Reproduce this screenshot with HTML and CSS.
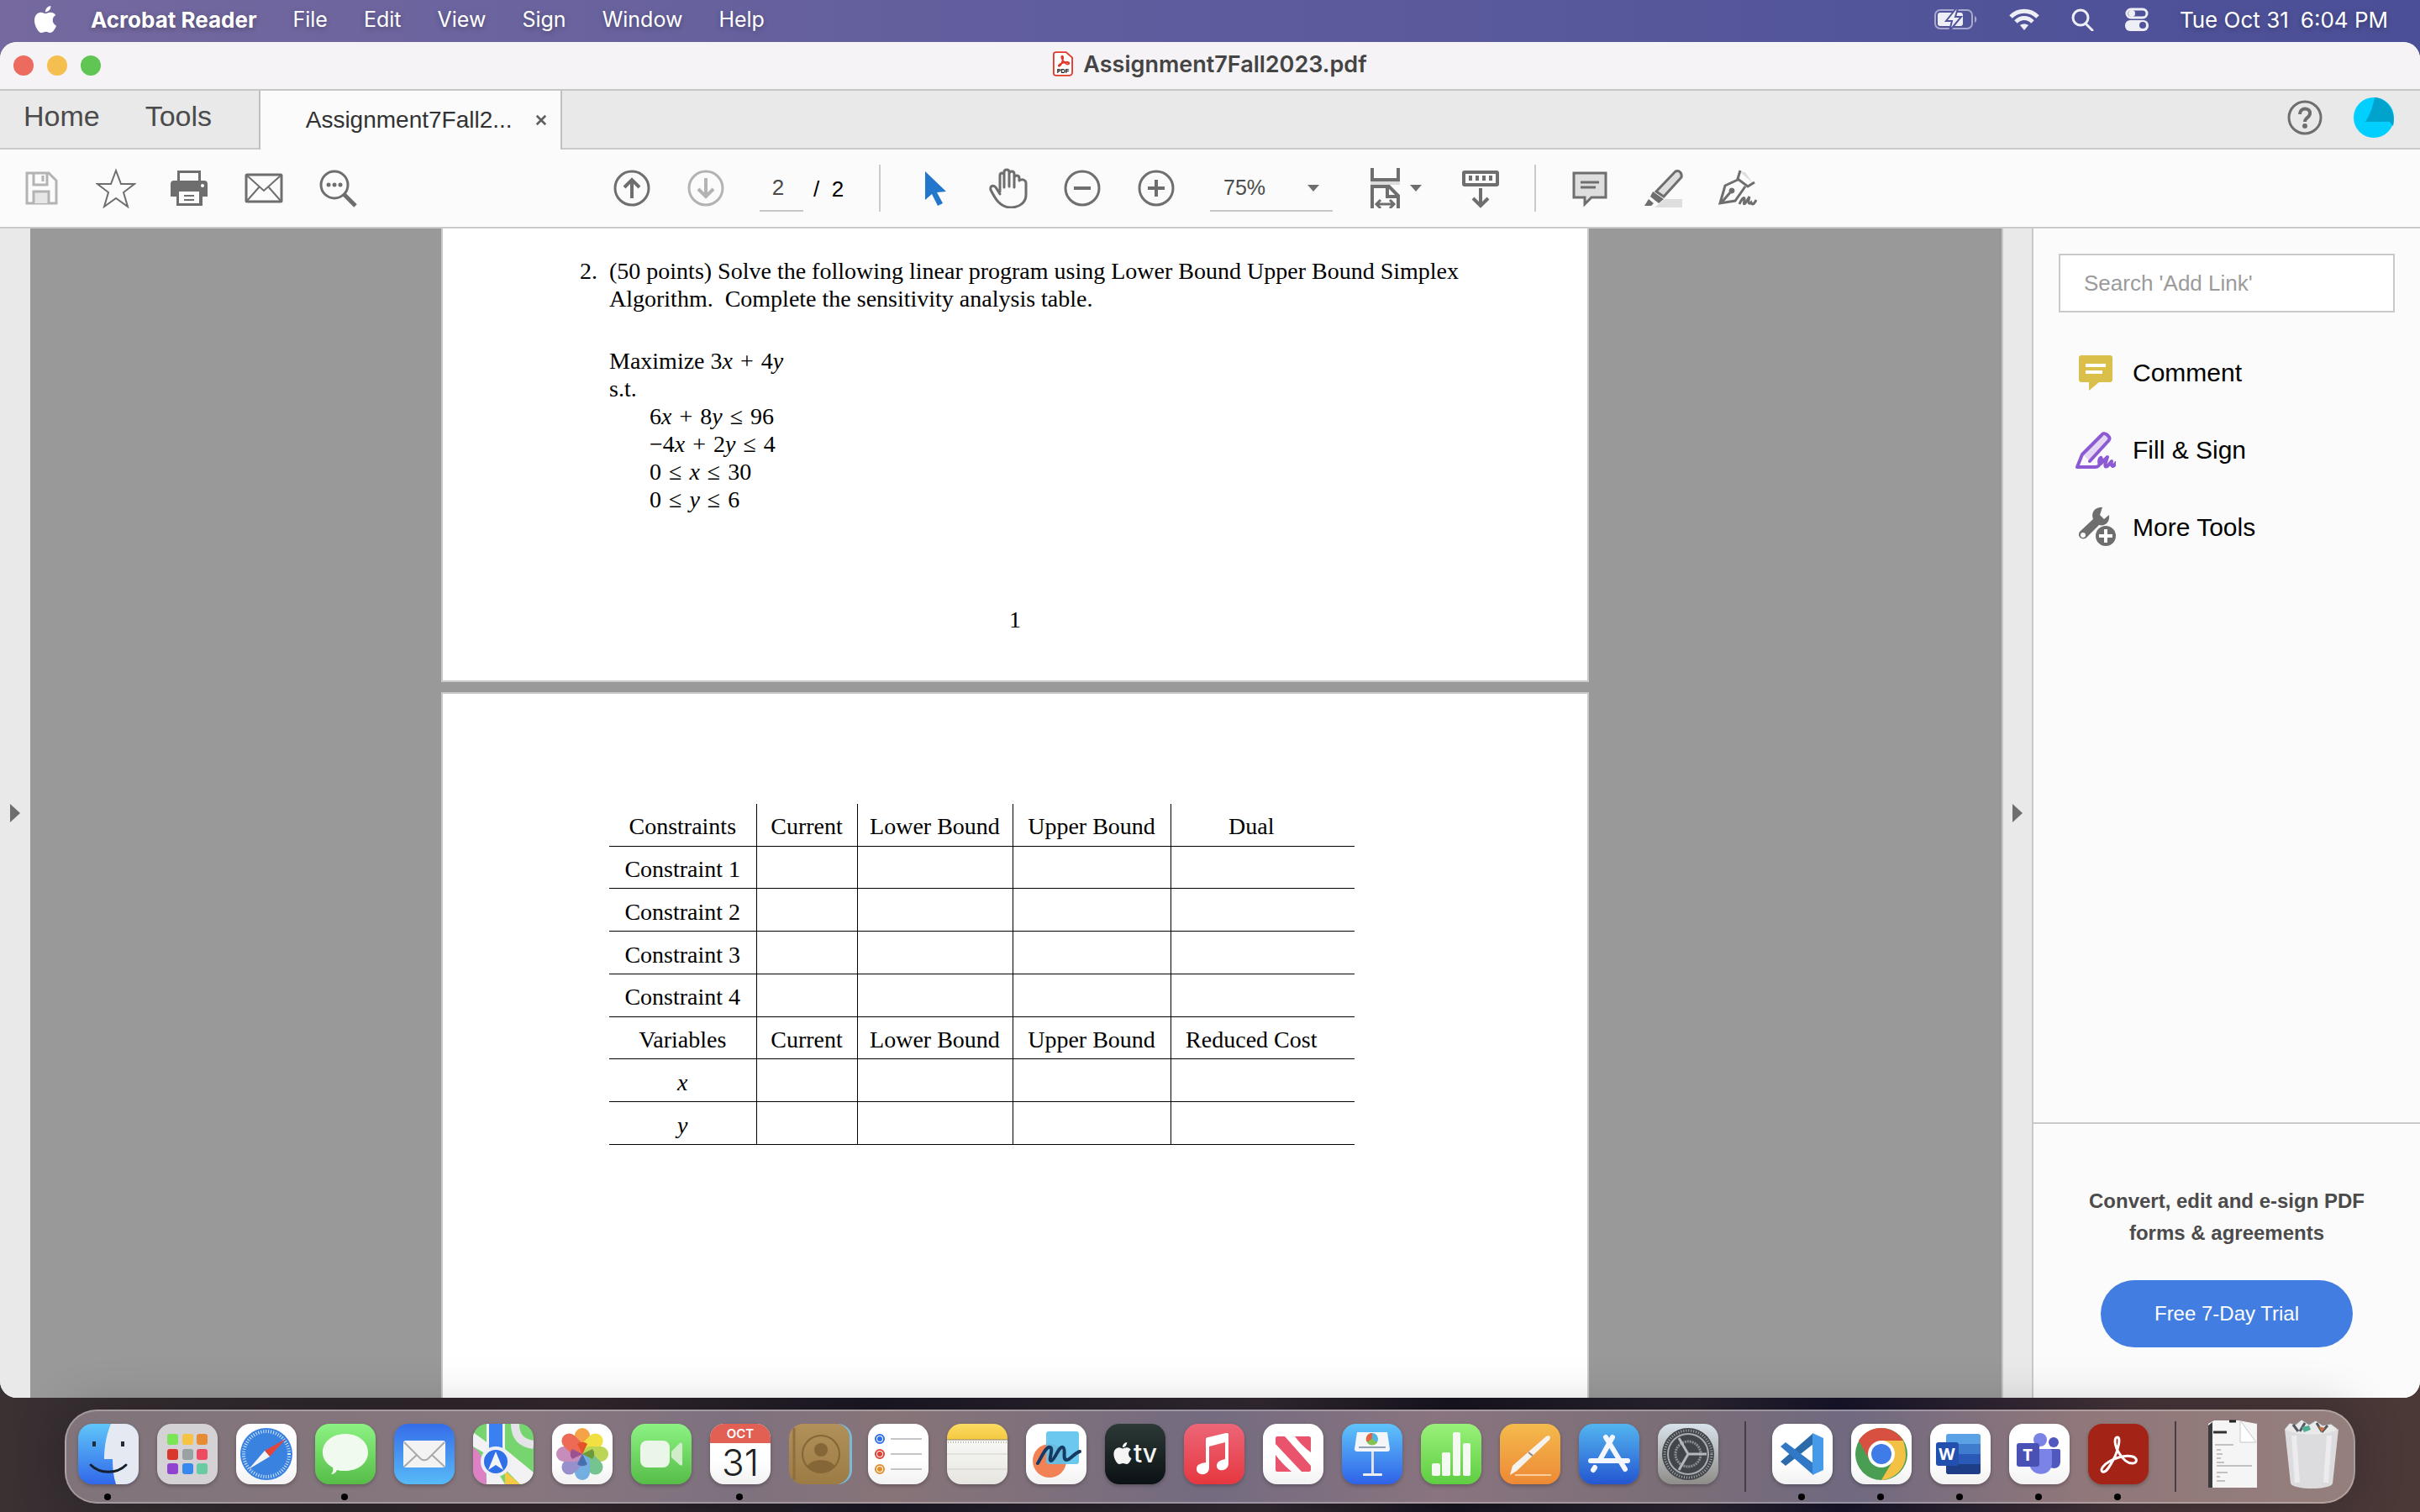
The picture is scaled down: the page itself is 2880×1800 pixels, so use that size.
FILE: index.html
```html
<!DOCTYPE html>
<html lang="en">
<head>
  <meta charset="UTF-8" />
  <title>Assignment7Fall2023.pdf</title>
  <link rel="stylesheet" href="styles.css">
</head>
<body>
  <header class="menubar">
    <nav class="menus">
      <svg class="apple" viewBox="0 0 24 24" fill="#fff"><path d="M12.152 6.896c-.948 0-2.415-1.078-3.96-1.04-2.04.027-3.91 1.183-4.961 3.014-2.117 3.675-.546 9.103 1.519 12.09 1.013 1.454 2.208 3.09 3.792 3.039 1.52-.065 2.09-.987 3.935-.987 1.831 0 2.35.987 3.96.948 1.637-.026 2.676-1.48 3.676-2.948 1.156-1.688 1.636-3.325 1.662-3.415-.039-.013-3.182-1.221-3.22-4.857-.026-3.04 2.48-4.494 2.597-4.559-1.429-2.09-3.623-2.324-4.39-2.376-2-.156-3.675 1.09-4.61 1.09zM15.53 3.83c.843-1.012 1.4-2.427 1.245-3.83-1.207.052-2.662.805-3.532 1.818-.78.896-1.454 2.338-1.273 3.714 1.338.104 2.715-.688 3.559-1.701"/></svg>
      <a href="#" class="app-name">Acrobat Reader</a>
      <a href="#">File</a>
      <a href="#">Edit</a>
      <a href="#">View</a>
      <a href="#">Sign</a>
      <a href="#">Window</a>
      <a href="#">Help</a>
    </nav>
    <div class="status">
      <svg width="52" height="28" viewBox="0 0 52 28"><rect x="1" y="3" width="44" height="22" rx="6" fill="none" stroke="#a9a9d0" stroke-width="2"/><path d="M48 10c3 1 3 7 0 8z" fill="#a9a9d0"/><rect x="4" y="6" width="30" height="16" rx="3" fill="#eeeef6"/><path d="M26 1L14 16h7l-3 12L32 11h-7l3-10z" fill="#eeeef6" stroke="#51549b" stroke-width="2"/></svg>
      <svg width="36" height="28" viewBox="0 0 36 28" fill="none" stroke="#eeeef6" stroke-width="5"><path d="M2 11C11 2 25 2 34 11"/><path d="M8 17c6-6 14-6 20 0"/><path d="M18 27l-5-6c3-2 7-2 10 0z" fill="#eeeef6" stroke="none"/></svg>
      <svg width="28" height="28" viewBox="0 0 28 28" fill="none" stroke="#eeeef6" stroke-width="3"><circle cx="12" cy="12" r="9"/><path d="M18 19l8 8" stroke-linecap="round"/></svg>
      <svg width="28" height="28" viewBox="0 0 28 28"><rect x="2" y="2" width="24" height="10" rx="5" fill="none" stroke="#eeeef6" stroke-width="3"/><circle cx="8" cy="7" r="4" fill="#eeeef6"/><rect x="0" y="15" width="28" height="13" rx="6" fill="#eeeef6"/><circle cx="21" cy="21" r="4" fill="#51549b"/></svg>
      <time class="clock"><span>Tue Oct 31</span><span>6:04 PM</span></time>
    </div>
  </header>

  <div class="window">
    <div class="titlebar">
      <div class="lights">
        <button class="light close" aria-label="Close"></button>
        <button class="light minimize" aria-label="Minimize"></button>
        <button class="light zoom" aria-label="Zoom"></button>
      </div>
      <svg width="24" height="30" viewBox="0 0 26 32"><path d="M4 1h13l8 7v19a4 4 0 0 1-4 4H4a3 3 0 0 1-3-3V4a3 3 0 0 1 3-3z" fill="#fff" stroke="#e2382c" stroke-width="2"/><path d="M12 6c-2 0 0 6 4 9 2 2 5 2 5 0s-6-1-9 0-6 4-4 4c3 0 7-13 4-13z" fill="none" stroke="#e2382c" stroke-width="2"/><text x="13" y="28" class="pdf-label">PDF</text></svg>
      <h1>Assignment7Fall2023.pdf</h1>
    </div>

    <div class="tabbar">
      <a href="#" class="home">Home</a>
      <a href="#" class="tools">Tools</a>
      <div class="tab">
        <span>Assignment7Fall2...</span>
        <button aria-label="Close tab"><svg width="14" height="14" viewBox="0 0 16 16" stroke="#5f5f5f" stroke-width="3"><path d="M2 2l12 12M14 2L2 14"/></svg></button>
      </div>
      <div class="account">
        <button aria-label="Help"><svg width="44" height="44" viewBox="0 0 44 44"><circle cx="22" cy="22" r="19" fill="none" stroke="#6e6e6e" stroke-width="3"/><path d="M16 18c0-9 13-8 12-1 0 5-6 5-6 10" fill="none" stroke="#6e6e6e" stroke-width="4"/><circle cx="22" cy="32" r="3" fill="#6e6e6e"/></svg></button>
        <button aria-label="Account"><svg width="48" height="48" viewBox="0 0 48 48"><circle cx="24" cy="24" r="24" fill="#00cfff"/><path d="M25 0c15 1 26 17 22 34l-4-5H14C20 20 23 10 25 0z" fill="#00a3cb"/></svg></button>
      </div>
    </div>

    <div class="toolbar">
      <div class="file-tools">
        <button aria-label="Save"><svg viewBox="0 0 48 48" fill="none" stroke="#b3b3b3" stroke-width="3"><path d="M6 6h26l9 9v27H6z"/><path d="M14 6v14h16V6" /><path d="M25 9v7" /><path d="M14 42V28h18v14" fill="#e6e6e6"/></svg></button>
        <button aria-label="Star"><svg viewBox="0 0 48 48" fill="none" stroke="#6e6e6e" stroke-width="2"><path d="M24 3l6 16h16L33 29l5 17-14-10-14 10 5-17L2 19h16z"/></svg></button>
        <button aria-label="Print"><svg viewBox="0 0 48 48" fill="#6e6e6e"><path d="M9 3h28v12h4a4 4 0 0 1 4 4v15h-6v11H8V34H1V19a4 4 0 0 1 4-4h4zm3 3v9h22V6zm-1 22v14h24V28z" fill-rule="evenodd"/><path d="M17 32h12v2H17zM17 37h12v2H17z"/><circle cx="39" cy="21" r="2" fill="#fff"/></svg></button>
        <button aria-label="Email"><svg viewBox="0 0 48 48" fill="none" stroke="#6e6e6e" stroke-width="3"><rect x="3" y="8" width="42" height="32" rx="1"/><path d="M4 9l20 18L44 9M4 39l15-17M44 39L29 22" stroke-width="2"/></svg></button>
        <button aria-label="Find"><svg viewBox="0 0 48 48" fill="none" stroke="#6e6e6e" stroke-width="3"><circle cx="20" cy="20" r="16"/><path d="M31 31l14 14" stroke-width="5"/><g fill="#6e6e6e" stroke="none"><circle cx="13" cy="20" r="2.500"/><circle cx="20" cy="20" r="2.500"/><circle cx="27" cy="20" r="2.500"/></g></svg></button>
      </div>

      <div class="page-tools">
        <button aria-label="Previous page"><svg viewBox="0 0 48 48" fill="none" stroke="#6e6e6e" stroke-width="3"><circle cx="24" cy="24" r="20"/><path d="M24 36V14M15 23l9-9 9 9" stroke-width="4"/></svg></button>
        <button aria-label="Next page"><svg viewBox="0 0 48 48" fill="none" stroke="#b3b3b3" stroke-width="3"><circle cx="24" cy="24" r="20"/><path d="M24 12v22M15 25l9 9 9-9" stroke-width="4"/></svg></button>
        <input class="page-input" type="text" value="2" aria-label="Page">
        <span class="page-count">/&nbsp; 2</span>
        <span class="divider"></span>
        <button aria-label="Select"><svg viewBox="0 0 48 48" fill="#2276cc"><path d="M13 4v34l8-7 7 14 6-3-7-13 11-1z"/></svg></button>
        <button aria-label="Hand"><svg viewBox="0 0 48 48" fill="none" stroke="#6e6e6e" stroke-width="3" stroke-linejoin="round" stroke-linecap="round"><path d="M14 28V9c0-4 5-4 5 0v14V5c0-4 6-4 6 0v17V7c0-4 6-4 6 0v16V12c0-4 6-4 6 0v3c4-3 8 0 8 3v14c0 9-8 15-18 15C14 47 8 36 3 26c-1-5 3-6 6-3l5 8" /></svg></button>
        <button aria-label="Zoom out"><svg viewBox="0 0 48 48" fill="none" stroke="#6e6e6e" stroke-width="3"><circle cx="24" cy="24" r="20"/><path d="M14 24h20" stroke-width="4"/></svg></button>
        <button aria-label="Zoom in"><svg viewBox="0 0 48 48" fill="none" stroke="#6e6e6e" stroke-width="3"><circle cx="24" cy="24" r="20"/><path d="M14 24h20M24 14v20" stroke-width="4"/></svg></button>
        <div class="zoom-level">
          <select aria-label="Zoom level"><option>75%</option></select>
          <svg width="14" height="8" viewBox="0 0 14 8" fill="#6e6e6e"><path d="M0 0h14L7 8z"/></svg>
        </div>
        <button class="fit" aria-label="Fit width"><svg viewBox="0 0 48 48" fill="none" stroke="#6e6e6e" stroke-width="4"><path d="M11 0v14h31V0"/><path d="M9 18h35" stroke="#dcdcdc"/><path d="M11 48V22h20l11 11v15M29 22v12h12"/><path d="M16 43h21M21 38l-5 5 5 5M32 38l5 5-5 5" stroke-width="3"/></svg><svg class="caret" viewBox="0 0 14 8" fill="#6e6e6e"><path d="M0 0h14L7 8z"/></svg></button>
        <button class="scroll-mode" aria-label="Scrolling"><svg viewBox="0 0 48 48" fill="none" stroke="#6e6e6e" stroke-width="4"><rect x="4" y="5" width="40" height="15" rx="1"/><path d="M10 12h28" stroke-width="6" stroke-dasharray="4 4"/><path d="M24 24v20M15 36l9 9 9-9"/></svg></button>
        <span class="divider"></span>
        <button aria-label="Comment"><svg viewBox="0 0 48 48" fill="#dedede" stroke="#6e6e6e" stroke-width="3"><path d="M5 6h38v29H26l-8 8v-8H5z"/><path d="M13 17h22M13 23h18"/></svg></button>
        <button aria-label="Highlight"><svg viewBox="0 0 48 48"><path d="M46 37v10H13l12-10z" fill="#dedede"/><path d="M38 4c5-2 8 3 7 7L24 34l-9-6z" fill="#dedede" stroke="#6e6e6e" stroke-width="3"/><path d="M11 28l13 9-6 5-10-8zM6 37l6 5-3 3H1z" fill="#6e6e6e"/></svg></button>
        <button aria-label="Sign"><svg viewBox="0 0 48 48" fill="none" stroke="#6e6e6e" stroke-width="3"><path d="M26 4l16 14-9-13z" fill="#dedede" stroke="none"/><path d="M27 3l-3 10 12 9 8-5M24 14L9 21 3 42l18-3 12-17M4 42l12-14"/><circle cx="17" cy="27" r="3" fill="#6e6e6e" stroke-width="1"/><path d="M26 43c2-5 6-10 6-6s-2 7 1 5l5-8c-2 7-1 10 2 7 1 3 3 3 6-3"/></svg></button>
      </div>
    </div>

    <div class="workspace">
      <button class="rail" aria-label="Open navigation pane"><svg width="12" height="22" viewBox="0 0 12 22" fill="#6e6e6e"><path d="M0 0l12 11L0 22z"/></svg></button>

      <main class="viewer">
        <section class="page">
          <div class="question">
            <span class="number">2.</span>
            <div>
              <p>(50 points) Solve the following linear program using Lower Bound Upper Bound Simplex<br>Algorithm.&nbsp; Complete the sensitivity analysis table.</p>
              <p class="program">Maximize 3<i>x</i> <span class="op">+</span> 4<i>y</i><br>s.t.</p>
              <p class="limits">6<i>x</i> <span class="op">+</span> 8<i>y</i> <span class="op">≤</span> 96<br>−4<i>x</i> <span class="op">+</span> 2<i>y</i> <span class="op">≤</span> 4<br>0 <span class="op">≤</span> <i>x</i> <span class="op">≤</span> 30<br>0 <span class="op">≤</span> <i>y</i> <span class="op">≤</span> 6</p>
            </div>
          </div>
          <p class="folio">1</p>
        </section>

        <section class="page second">
          <table class="sensitivity">
            <tr><th>Constraints</th><th>Current</th><th>Lower Bound</th><th>Upper Bound</th><th>Dual</th></tr>
            <tr><td>Constraint 1</td><td></td><td></td><td></td><td></td></tr>
            <tr><td>Constraint 2</td><td></td><td></td><td></td><td></td></tr>
            <tr><td>Constraint 3</td><td></td><td></td><td></td><td></td></tr>
            <tr><td>Constraint 4</td><td></td><td></td><td></td><td></td></tr>
            <tr><th>Variables</th><th>Current</th><th>Lower Bound</th><th>Upper Bound</th><th>Reduced Cost</th></tr>
            <tr><td><i>x</i></td><td></td><td></td><td></td><td></td></tr>
            <tr><td><i>y</i></td><td></td><td></td><td></td><td></td></tr>
          </table>
        </section>
      </main>

      <button class="rail right" aria-label="Close tools pane"><svg width="12" height="22" viewBox="0 0 12 22" fill="#6e6e6e"><path d="M0 0l12 11L0 22z"/></svg></button>

      <aside class="panel">
        <input class="search" type="text" placeholder="Search 'Add Link'" aria-label="Search tools">
        <nav class="tool-list">
          <a href="#"><svg viewBox="0 0 48 48"><path d="M7 3h34a3 3 0 0 1 3 3v26a3 3 0 0 1-3 3H28L16 45V35H7a3 3 0 0 1-3-3V6a3 3 0 0 1 3-3z" fill="#dabf4a"/><path d="M12 15h24M12 23h20" stroke="#fff" stroke-width="4"/></svg>Comment</a>
          <a href="#"><svg viewBox="0 0 48 48" fill="none" stroke="#8c5ad3" stroke-width="4" stroke-linejoin="round" stroke-linecap="round"><path d="M10 30L31 6c2-3 5-2 7 0s4 4 1 7L17 37z" fill="#e4d8f3" stroke="none"/><path d="M17 37l22-24c3-3 1-5-1-7s-5-3-7 0L8 29 2 44h22c6 0 8-12 6-11s-3 8 0 7l8-8c-3 9-4 13 0 11l5-6c-1 7 2 8 5 2"/></svg>Fill &amp; Sign</a>
          <a href="#"><svg viewBox="0 0 48 48" fill="#6e6e6e"><path d="M32 0c-9-1-14 7-11 14L5 29c-4 6 4 12 9 6l14-14c8 2 13-4 12-12l-6 5-5-5zM9 30a3 3 0 1 1 0 6 3 3 0 0 1 0-6z" fill-rule="evenodd"/><circle cx="36" cy="34" r="12"/><path d="M28 34h16M36 26v16" stroke="#fff" stroke-width="4"/></svg>More Tools</a>
        </nav>
        <div class="promo">
          <p>Convert, edit and e-sign PDF<br>forms &amp; agreements</p>
          <button>Free 7-Day Trial</button>
        </div>
      </aside>
    </div>
  </div>

  <footer class="dock-area">
    <div class="dock">
      <button class="app finder running" aria-label="Finder"><svg viewBox="0 0 72 72"><path d="M39 0h33v72H45c-3-9-4-19-4-30H31C31 26 34 12 39 0z" fill="#e4e9f2"/><path d="M19 21v6M53 21v6" stroke="#222b38" stroke-width="4"/><path d="M15 49c11 11 31 11 42 0" fill="none" stroke="#15202e" stroke-width="3" stroke-linecap="round"/></svg></button>
      <button class="app launchpad" aria-label="Launchpad"><svg viewBox="0 0 72 72"><rect x="12" y="12" width="13" height="13" rx="3" fill="#7ae555"/><rect x="30" y="12" width="13" height="13" rx="3" fill="#f6c343"/><rect x="47" y="12" width="13" height="13" rx="3" fill="#e78c34"/><rect x="12" y="30" width="13" height="13" rx="3" fill="#d9362d"/><rect x="30" y="30" width="13" height="13" rx="3" fill="#9aa1a2"/><rect x="47" y="30" width="13" height="13" rx="3" fill="#ed4b62"/><rect x="12" y="47" width="13" height="13" rx="3" fill="#9043cf"/><rect x="30" y="47" width="13" height="13" rx="3" fill="#3789ee"/><rect x="47" y="47" width="13" height="13" rx="3" fill="#68cba4"/></svg></button>
      <button class="app white" aria-label="Safari"><svg viewBox="0 0 72 72"><circle cx="36" cy="36" r="31" fill="#3a82e0"/><circle cx="36" cy="36" r="27" fill="none" stroke="#d6e8fb" stroke-width="4" stroke-dasharray="1 2"/><path d="M59 18L34 32l6 7z" fill="#e2453a"/><path d="M15 54l19-22 6 7z" fill="#f3f4f6"/></svg></button>
      <button class="app green running" aria-label="Messages"><svg viewBox="0 0 72 72"><path d="M36 12c15 0 27 9 27 22S51 56 36 56c-4 0-7 0-10-1-1 3-4 5-7 5 2-2 3-5 2-8C14 48 9 42 9 34c0-13 12-22 27-22z" fill="#f0faee"/></svg></button>
      <button class="app mail" aria-label="Mail"><svg viewBox="0 0 72 72"><rect x="11" y="20" width="50" height="32" rx="3" fill="#f3f3f3"/><path d="M12 22l20 20c3 2 5 2 8 0l20-20M12 51l15-14M60 51L45 37" fill="none" stroke="#a9a9a9" stroke-width="2"/></svg></button>
      <button class="app maps" aria-label="Maps"><svg viewBox="0 0 72 72"><path d="M0 28c8 5 16 16 16 44H0z" fill="#dd80c4"/><path d="M16 36l22 36H16zM0 10l19 14v14L0 27zM38 30l34 28v14H56L36 52z" fill="#f2f2f4"/><path d="M38 56l18 16H38z" fill="#f5c944"/><rect x="16" y="0" width="22" height="36" fill="#f2f2f4"/><rect x="19" y="0" width="16" height="36" fill="#3a80f0"/><path d="M50 0c0 16 8 23 22 25" fill="none" stroke="#e4e4e8" stroke-width="10"/><circle cx="27" cy="45" r="16" fill="#2f6fe8" stroke="#eeeef6" stroke-width="4"/><path d="M27 33l9 22-9-6-9 6z" fill="#f4f4f8"/></svg></button>
      <button class="app white" aria-label="Photos"><svg viewBox="0 0 72 72"><g opacity=".9"><rect x="27" y="5" width="18" height="31" rx="9" fill="#f69a34"/><rect x="27" y="5" width="18" height="31" rx="9" fill="#f1dc2e" transform="rotate(45 36 36)"/><rect x="27" y="5" width="18" height="31" rx="9" fill="#b6d143" transform="rotate(90 36 36)"/><rect x="27" y="5" width="18" height="31" rx="9" fill="#67bd85" transform="rotate(135 36 36)"/><rect x="27" y="5" width="18" height="31" rx="9" fill="#65a7df" transform="rotate(180 36 36)"/><rect x="27" y="5" width="18" height="31" rx="9" fill="#8d83c8" transform="rotate(225 36 36)"/><rect x="27" y="5" width="18" height="31" rx="9" fill="#c181b3" transform="rotate(270 36 36)"/><rect x="27" y="5" width="18" height="31" rx="9" fill="#ec5a45" transform="rotate(315 36 36)"/></g><path d="M36 36l-6-12a9 9 0 0 1 12 0z" fill="#e2552b"/><path d="M36 36l-6 12a9 9 0 0 0 12 0z" fill="#4a6fae"/><path d="M36 36l-12-6a9 9 0 0 0 0 12z" fill="#9c5190"/><path d="M36 36l12-6a9 9 0 0 1 0 12z" fill="#6f9a3a"/></svg></button>
      <button class="app green" aria-label="FaceTime"><svg viewBox="0 0 72 72" fill="#eaf7e8"><rect x="11" y="20" width="35" height="32" rx="8"/><path d="M48 33l10-10c2-1 3 0 3 2v22c0 3-1 3-3 2L48 40z" fill="#d0edca"/></svg></button>
      <button class="app white calendar running" aria-label="Calendar"><span class="month">OCT</span><span class="day">31</span></button>
      <button class="app contacts" aria-label="Contacts"><svg viewBox="0 0 72 72"><path d="M6 5v62" stroke="#8e6f3d" stroke-width="3"/><circle cx="38" cy="36" r="22" fill="none" stroke="#846637" stroke-width="2"/><circle cx="38" cy="31" r="8" fill="#846637"/><path d="M22 50c5-9 27-9 32 0-8 11-24 11-32 0z" fill="#846637"/></svg></button>
      <button class="app white" aria-label="Reminders"><svg viewBox="0 0 72 72"><path d="M27 18h37M27 36h37M27 54h37" stroke="#c4c5c8" stroke-width="2"/><g fill="#fff" stroke-width="2"><circle cx="14" cy="18" r="5" stroke="#2f70ea"/><circle cx="14" cy="36" r="5" stroke="#dd4236"/><circle cx="14" cy="54" r="5" stroke="#e28e2d"/></g><circle cx="14" cy="18" r="3" fill="#2f70ea"/><circle cx="14" cy="36" r="3" fill="#dd4236"/><circle cx="14" cy="54" r="3" fill="#e28e2d"/></svg></button>
      <button class="app notes" aria-label="Notes"><svg viewBox="0 0 72 72"><path d="M0 19h72" stroke="#8c8672" stroke-width="1"/><path d="M1 22h70" stroke="#b9b9b6" stroke-width="2" stroke-dasharray="1 2"/><path d="M0 36h72M0 54h72" stroke="#d0d0cd" stroke-width="1"/></svg></button>
      <button class="app white" aria-label="Freeform"><svg viewBox="0 0 72 72"><circle cx="28" cy="44" r="20" fill="#f28155"/><rect x="24" y="9" width="39" height="39" rx="3" fill="#5bc3ee" opacity=".9"/><path d="M14 47c5-8 10-21 15-19 4 2-3 16 1 16s9-18 14-16c4 2-1 14 4 15 4 1 9-8 16-10" fill="none" stroke="#173a63" stroke-width="4" stroke-linecap="round"/></svg></button>
      <button class="app tv" aria-label="TV"><svg viewBox="0 0 24 24" fill="#f5f5f5"><path d="M12.152 6.896c-.948 0-2.415-1.078-3.96-1.04-2.04.027-3.91 1.183-4.961 3.014-2.117 3.675-.546 9.103 1.519 12.09 1.013 1.454 2.208 3.09 3.792 3.039 1.52-.065 2.09-.987 3.935-.987 1.831 0 2.35.987 3.96.948 1.637-.026 2.676-1.48 3.676-2.948 1.156-1.688 1.636-3.325 1.662-3.415-.039-.013-3.182-1.221-3.22-4.857-.026-3.04 2.48-4.494 2.597-4.559-1.429-2.09-3.623-2.324-4.39-2.376-2-.156-3.675 1.09-4.61 1.09zM15.53 3.83c.843-1.012 1.4-2.427 1.245-3.83-1.207.052-2.662.805-3.532 1.818-.78.896-1.454 2.338-1.273 3.714 1.338.104 2.715-.688 3.559-1.701"/></svg><span>tv</span></button>
      <button class="app music" aria-label="Music"><svg viewBox="0 0 72 72" fill="#fff"><path d="M26 19c0-2 1-3 3-3l21-5c2 0 3 0 3 2v34c0 10-14 11-14 3 0-5 5-7 10-8V22l-19 5v25c0 11-15 10-15 2 0-6 5-7 11-8z"/></svg></button>
      <button class="app white" aria-label="News"><svg viewBox="0 0 72 72" fill="#e9536b"><path d="M15 17c0-1 1-2 2-2h9l31 35v5c0 1-1 2-2 2h-9L15 24zM38 15h17c1 0 2 1 2 2v17C50 29 43 22 38 15zM15 37c5 7 12 14 19 20H17c-1 0-2-1-2-2z"/></svg></button>
      <button class="app keynote" aria-label="Keynote"><svg viewBox="0 0 72 72"><path d="M35 30h3v31h-3z" fill="#dfe3e8"/><rect x="25" y="59" width="23" height="3" rx="1" fill="#eee"/><path d="M18 10h36l3 20c0 2-1 3-3 3H18c-2 0-3-1-3-3z" fill="#f3f5f8"/><path d="M20 28h32" stroke="#8fa2b7" stroke-width="2"/><circle cx="36" cy="18" r="7" fill="#4db5e4"/><path d="M36 18v-7a7 7 0 0 0-6 11z" fill="#e4643d"/><path d="M36 18l-6 4a7 7 0 0 0 12 0z" fill="#84c250"/></svg></button>
      <button class="app numbers" aria-label="Numbers"><svg viewBox="0 0 72 72" fill="#f4faf2"><rect x="13" y="47" width="10" height="15" rx="2"/><rect x="25" y="34" width="10" height="28" rx="2"/><rect x="38" y="10" width="9" height="52" rx="2"/><rect x="50" y="23" width="9" height="39" rx="2"/></svg></button>
      <button class="app pages" aria-label="Pages"><svg viewBox="0 0 72 72"><path d="M18 61h43" stroke="#fbcf99" stroke-width="2"/><path d="M12 61l3-11 40-35c4-2 6 0 4 4L20 56z" fill="#f6f3ef"/><path d="M34 34l5 4" stroke="#8d8580" stroke-width="2"/></svg></button>
      <button class="app appstore" aria-label="App Store"><svg viewBox="0 0 72 72" stroke="#f4f8fe" stroke-width="6" stroke-linecap="round"><path d="M40 16L25 43M32 16l23 38M14 44h44M19 52l-2 3"/></svg></button>
      <button class="app settings" aria-label="System Settings"><svg viewBox="0 0 72 72" fill="none"><circle cx="36" cy="36" r="31" fill="#42454a"/><circle cx="36" cy="36" r="28" stroke="#a9adb1" stroke-width="3" stroke-dasharray="1 2"/><circle cx="36" cy="36" r="24" stroke="#a9adb1" stroke-width="2"/><circle cx="36" cy="36" r="15" stroke="#8b8f94" stroke-width="3" stroke-dasharray="2 1"/><path d="M36 36h22M36 36L25 17M36 36L25 55" stroke="#b5b9bd" stroke-width="3"/></svg></button>
      <span class="separator"></span>
      <button class="app white running" aria-label="Visual Studio Code"><svg viewBox="0 0 72 72"><path d="M10 45l6 5 33-26V11z" fill="#2b6bab"/><path d="M10 27l6-5 33 25v14z" fill="#3179c6"/><path d="M48 11l13 6v38l-13 6z" fill="#459ae9"/></svg></button>
      <button class="app white running" aria-label="Chrome"><svg viewBox="0 0 72 72"><circle cx="36" cy="36" r="31" fill="#4a9e54"/><path d="M36 20h26q3 8 3 17c0 17-14 29-29 30l13-22z" fill="#f3c144"/><path d="M9 20a31 31 0 0 1 53 0H36L22 43z" fill="#d85140"/><circle cx="36" cy="36" r="16" fill="#fff"/><circle cx="36" cy="36" r="12" fill="#3f7ce8"/></svg></button>
      <button class="app white running" aria-label="Word"><svg viewBox="0 0 72 72"><rect x="19" y="12" width="41" height="48" rx="3" fill="#5ba1e6"/><path d="M19 24h41v12H19z" fill="#3f7ccd"/><path d="M19 36h41v12H19z" fill="#2b59b8"/><path d="M19 48h41v9q0 3-3 3H22q-3 0-3-3z" fill="#1e3f87"/><rect x="7" y="22" width="27" height="28" rx="3" fill="#2250ae"/><text x="20" y="43" class="tile-letter">W</text></svg></button>
      <button class="app white running" aria-label="Teams"><svg viewBox="0 0 72 72"><circle cx="37" cy="19" r="8" fill="#7b83e6"/><circle cx="53" cy="22" r="6" fill="#5259be"/><path d="M44 30h15q2 0 2 2v13c0 10-12 10-17 3z" fill="#5259be"/><path d="M24 30h24q3 0 3 3v14c0 17-26 17-27 0z" fill="#7b83e6"/><rect x="9" y="23" width="27" height="28" rx="3" fill="#4a51b5"/><text x="22" y="44" class="tile-letter">T</text></svg></button>
      <button class="app acrobat running" aria-label="Acrobat"><svg viewBox="0 0 72 72" fill="none" stroke="#fff" stroke-width="3"><path d="M35 16c-5 0-3 12 2 19 5 8 10 12 15 12 7 0 7-6 1-8-8-2-19 1-28 6-7 4-11 10-8 12 5 2 10-9 15-18 4-9 7-23 3-23z"/></svg></button>
      <span class="separator"></span>
      <button class="app plain" aria-label="Documents"><svg viewBox="0 0 72 84"><path d="M7 6l7-4h29l22 4v76H7z" fill="#f5f5f5"/><path d="M7 8l5-4v78H7z" fill="#3b3b3e"/><path d="M45 2v26h19z" fill="#fff" stroke="#c8c8c8"/><path d="M13 16h16" stroke="#333" stroke-width="3"/><path d="M32 3h8" stroke="#222" stroke-width="3"/><path d="M15 31h22M17 37h5M17 42h7M17 47h5M17 52h9M17 56h42M17 64h13M17 69h4M17 74h10" stroke="#8d8d8d"/></svg></button>
      <button class="app plain" aria-label="Trash"><svg viewBox="0 0 72 84"><path d="M4 12l6-7 7 2 7-6 9 6 8-5 8 6 10-2 8 6-3 8H8z" fill="#e9e9ea" stroke="#8f8f91"/><path d="M14 7l6 8M28 5l-6 10M42 5l6 10M55 8l-7 8" stroke="#55575e" stroke-width="3"/><path d="M24 10l9-2 2 5-8 3z" fill="#4fae93"/><path d="M44 9l8 2-4 5z" fill="#c76f42"/><path d="M4 12c12 9 52 9 64 0l-7 65c-3 8-46 8-50 0z" fill="#dcdcde"/><path d="M15 20l4 56M57 20l-4 56" stroke="#ececee" stroke-width="6"/></svg></button>
    </div>
  </footer>
</body>
</html>
```
FILE: styles.css
```css
* {
  box-sizing: border-box;
}
body {
  margin: 0;
  height: 100vh;
  display: flex;
  flex-direction: column;
  overflow: hidden;
  font-family: "Liberation Sans", Arial, sans-serif;
  background:
    linear-gradient(90deg, #75699f, #5c5b9d 52%, #4b4f97) top / 100% 120px no-repeat,
    linear-gradient(90deg, #3a3133, #2e262c 14%, #33282d 24%, #1b1824 36%, #332932 52%, #17141f 60%, #2b2530 70%, #17142a 76%, #46353a 88%, #4b3937);
}
button {
  font: inherit;
  padding: 0;
  border: 0;
  background: none;
}
a {
  color: inherit;
  text-decoration: none;
}
p {
  margin: 0;
}
svg {
  display: block;
}

/* menu bar */
.menubar {
  height: 50px;
  flex: none;
  display: flex;
  justify-content: space-between;
  align-items: center;
  padding: 0 38px;
  color: #fff;
  font-family: Inter, sans-serif;
  font-size: 25px;
  text-shadow: 0 2px 6px rgba(0, 0, 0, 0.3);
}
.menus {
  display: flex;
  align-items: center;
  gap: 43px;
  padding-bottom: 4px;
}
.apple {
  width: 32px;
  height: 32px;
  margin-right: -5px;
}
.app-name {
  font-size: 26px;
  font-weight: 700;
}
.status {
  display: flex;
  align-items: center;
  gap: 37px;
  padding-bottom: 4px;
}
.clock {
  display: flex;
  gap: 14px;
  font-size: 26px;
}

/* window */
.window {
  flex: 1;
  min-height: 0;
  display: flex;
  flex-direction: column;
  overflow: hidden;
  border-radius: 20px;
  background: #fbfbfb;
}
.titlebar {
  height: 56px;
  flex: none;
  position: relative;
  display: flex;
  align-items: center;
  justify-content: center;
  gap: 12px;
  padding-bottom: 4px;
  background: #f5f3f6;
}
.titlebar h1 {
  margin: 0;
  color: #444;
  font: 600 27px Inter, sans-serif;
}
.lights {
  position: absolute;
  left: 16px;
  top: 16px;
  display: flex;
  gap: 16px;
}
.light {
  width: 24px;
  height: 24px;
  border-radius: 50%;
}
.close {
  background: #ec6a5e;
}
.minimize {
  background: #f4bf4f;
}
.zoom {
  background: #61c554;
}
.pdf-label {
  font: 700 8px "Liberation Sans", sans-serif;
  text-anchor: middle;
}
.tabbar {
  height: 72px;
  flex: none;
  display: flex;
  border-top: 2px solid #c6c6c6;
  background: #e9e9e9;
  box-shadow: inset 0 -2px #c9c9c9;
  color: #4b4b4b;
}
.home,
.tools {
  padding-top: 11px;
  font-size: 34px;
}
.home {
  margin-left: 28px;
}
.tools {
  width: 135px;
  margin-left: 54px;
}
.tab {
  width: 361px;
  display: flex;
  align-items: center;
  justify-content: space-between;
  padding: 0 16px 0 54px;
  border: solid #c0c0c0;
  border-width: 0 2px;
  background: #fbfbfb;
  color: #323232;
  font-size: 28px;
}
.account {
  display: flex;
  align-items: center;
  gap: 36px;
  margin-left: auto;
  padding: 0 31px 6px 0;
}

/* toolbar */
.toolbar {
  height: 94px;
  flex: none;
  display: flex;
  align-items: center;
  gap: 262px;
  padding: 0 6px;
  border-bottom: 2px solid #c9c9c9;
  background: #fbfbfb;
}
.file-tools,
.page-tools {
  display: flex;
  align-items: center;
}
.toolbar button {
  width: 88px;
  height: 48px;
  display: flex;
  align-items: center;
  justify-content: center;
}
.toolbar button svg {
  width: 48px;
  height: 48px;
}
.page-input {
  width: 52px;
  height: 56px;
  margin-left: 20px;
  padding: 0 8px 0 0;
  border: 0;
  border-bottom: 2px solid #c6c6c6;
  background: none;
  color: #4b4b4b;
  font: 26px "Liberation Sans", sans-serif;
  text-align: center;
}
.page-count {
  width: 90px;
  padding: 2px 0 0 12px;
  font-size: 26px;
}
.divider {
  width: 2px;
  height: 56px;
  margin-right: 20px;
  background: #cacaca;
}
.zoom-level {
  position: relative;
  margin-left: 20px;
}
.zoom-level select {
  width: 146px;
  height: 56px;
  padding-left: 16px;
  appearance: none;
  border: 0;
  border-bottom: 2px solid #c6c6c6;
  border-radius: 0;
  background: none;
  color: #4b4b4b;
  font: 25px "Liberation Sans", sans-serif;
}
.zoom-level svg {
  position: absolute;
  right: 16px;
  top: 24px;
}
.toolbar .fit {
  width: 84px;
  margin: 0 12px 0 36px;
  justify-content: flex-start;
  gap: 8px;
}
.toolbar .caret {
  width: 14px;
  height: 8px;
}
.toolbar .scroll-mode {
  margin-right: 20px;
}

/* document area */
.workspace {
  flex: 1;
  min-height: 0;
  display: flex;
}
.rail {
  width: 36px;
  flex: none;
  display: flex;
  align-items: center;
  justify-content: center;
  background: #e9e9e9;
}
.right {
  border-left: 2px solid #c6c6c6;
}
.viewer {
  flex: 1;
  display: flex;
  flex-direction: column;
  align-items: center;
  gap: 12px;
  padding-right: 2px;
  overflow: hidden;
  background: #999;
  color: #000;
  font: 28px/33px "Liberation Serif", serif;
}
.page {
  width: 1366px;
  flex: none;
  padding: 34px 0 56px;
  border: solid #c9c9c9;
  border-width: 0 2px 2px;
  background: #fff;
}
.second {
  flex: 1 0 auto;
  padding: 131px 0 0 198px;
  border-width: 2px 2px 0;
}
.question {
  display: flex;
  margin-left: 163px;
}
.number {
  width: 35px;
}
.program {
  margin-top: 41px;
}
.op {
  margin: 0 2px;
}
.limits {
  padding-left: 48px;
}
.folio {
  margin-top: 110px;
  text-align: center;
}
.sensitivity {
  width: 887px;
  height: 406px;
  border-collapse: collapse;
  table-layout: fixed;
  text-align: center;
}
.sensitivity th {
  font-weight: 400;
}
.sensitivity th,
.sensitivity td {
  padding: 4px 0 0;
  border: solid #000;
  border-width: 0 1px 1px 0;
}
.sensitivity th:first-child {
  width: 175px;
}
.sensitivity th:nth-child(2) {
  width: 120px;
}
.sensitivity th:nth-child(3) {
  width: 185px;
}
.sensitivity th:nth-child(4) {
  width: 188px;
}
.sensitivity th:last-child,
.sensitivity td:last-child {
  padding-right: 27px;
  border-right: 0;
}

/* tools pane */
.panel {
  width: 462px;
  flex: none;
  display: flex;
  flex-direction: column;
  border-left: 2px solid #c9c9c9;
  background: #fbfbfb;
}
.search {
  height: 70px;
  margin: 30px 30px 26px;
  padding: 0 28px;
  border: 2px solid #c9c9c9;
  border-radius: 0;
  background: #fff;
  font: 26px "Liberation Sans", sans-serif;
}
.search::placeholder {
  color: #9b9b9b;
}
.tool-list a {
  height: 92px;
  display: flex;
  align-items: center;
  gap: 20px;
  padding-left: 50px;
  color: #000;
  font-size: 30px;
}
.tool-list svg {
  width: 48px;
  height: 48px;
}
.promo {
  margin-top: auto;
  padding: 73px 0 60px;
  border-top: 2px solid #c9c9c9;
  text-align: center;
}
.promo p {
  color: #4b4b4b;
  font-size: 24px;
  font-weight: 700;
  line-height: 38px;
}
.promo button {
  width: 300px;
  height: 80px;
  margin-top: 37px;
  border-radius: 40px;
  background: #427de1;
  color: #fff;
  font-size: 24px;
}

/* dock */
.dock-area {
  height: 136px;
  flex: none;
  display: flex;
  justify-content: center;
  align-items: flex-start;
  padding-top: 14px;
}
.dock {
  height: 112px;
  display: flex;
  gap: 22px;
  padding: 15px 14px;
  border: 2px solid rgba(255, 255, 255, 0.28);
  border-radius: 38px;
  background: linear-gradient(90deg, #80747a, #87767e 20%, #7e717f 29%, #877478 36%, #746b80 50%, #89747f 60%, #7b6e76 70%, #706980 78%, #90777a 88%, #957f7c);
  box-shadow: 0 0 60px rgba(0, 0, 0, 0.22);
}
.app {
  width: 72px;
  height: 72px;
  position: relative;
  border-radius: 17px;
  box-shadow: 0 2px 4px rgba(0, 0, 0, 0.25);
}
.app svg {
  width: 72px;
  height: 72px;
  border-radius: 17px;
}
.running::after {
  content: "";
  position: absolute;
  left: 31px;
  top: 83px;
  width: 8px;
  height: 8px;
  border-radius: 50%;
  background: #000;
}
.separator {
  width: 2px;
  height: 84px;
  margin: -3px 9px 0;
  background: #493d45;
}
.finder {
  background: linear-gradient(#5fc5f8, #3168ea);
}
.launchpad {
  background: #d4d2d5;
}
.white {
  background: linear-gradient(#fff 60%, #f2f2f2);
}
.green {
  background: linear-gradient(#8cf282, #57bd48);
}
.mail {
  background: linear-gradient(#356de9, #57baf7);
}
.maps {
  background: #76d56e;
}
.calendar {
  display: flex;
  flex-direction: column;
  align-items: center;
  font-family: Inter, sans-serif;
}
.month {
  width: 72px;
  height: 23px;
  border-radius: 17px 17px 0 0;
  background: #e25f53;
  color: #fff;
  font-size: 15px;
  font-weight: 600;
  line-height: 24px;
}
.day {
  color: #222;
  font-size: 44px;
  font-weight: 300;
  line-height: 46px;
}
.contacts {
  background: linear-gradient(#b1905a, #9c7b44);
  box-shadow: 3px 0 #79bad8;
}
.notes {
  background: linear-gradient(#fadb62, #f5c840 19px, #f8f8f6 19px, #e6e5e0);
}
.tv {
  display: flex;
  align-items: center;
  padding: 0 0 2px 8px;
  background: linear-gradient(#2c3936, #0b1115);
  color: #f5f5f5;
  font-family: Inter, sans-serif;
  font-size: 30px;
  font-weight: 500;
}
.tv svg {
  width: 26px;
  height: 26px;
  border-radius: 0;
}
.music {
  background: linear-gradient(#ed6678, #e6373f);
}
.keynote {
  background: linear-gradient(#5fc4fa, #2f62e8);
}
.numbers {
  background: linear-gradient(#98f179, #5fcd42);
}
.pages {
  background: linear-gradient(#f4ba4c, #ee8936);
}
.appstore {
  background: linear-gradient(#53b5ef, #2456d1);
}
.settings {
  background: linear-gradient(#d8e2ea, #8f8d89);
}
.acrobat {
  background: #a32416;
}
.plain {
  box-shadow: none;
}
.plain svg {
  height: 84px;
  margin-top: -6px;
  border-radius: 0;
}
.tile-letter {
  fill: #fff;
  font: 700 20px "Open Sans", sans-serif;
  text-anchor: middle;
}
```
